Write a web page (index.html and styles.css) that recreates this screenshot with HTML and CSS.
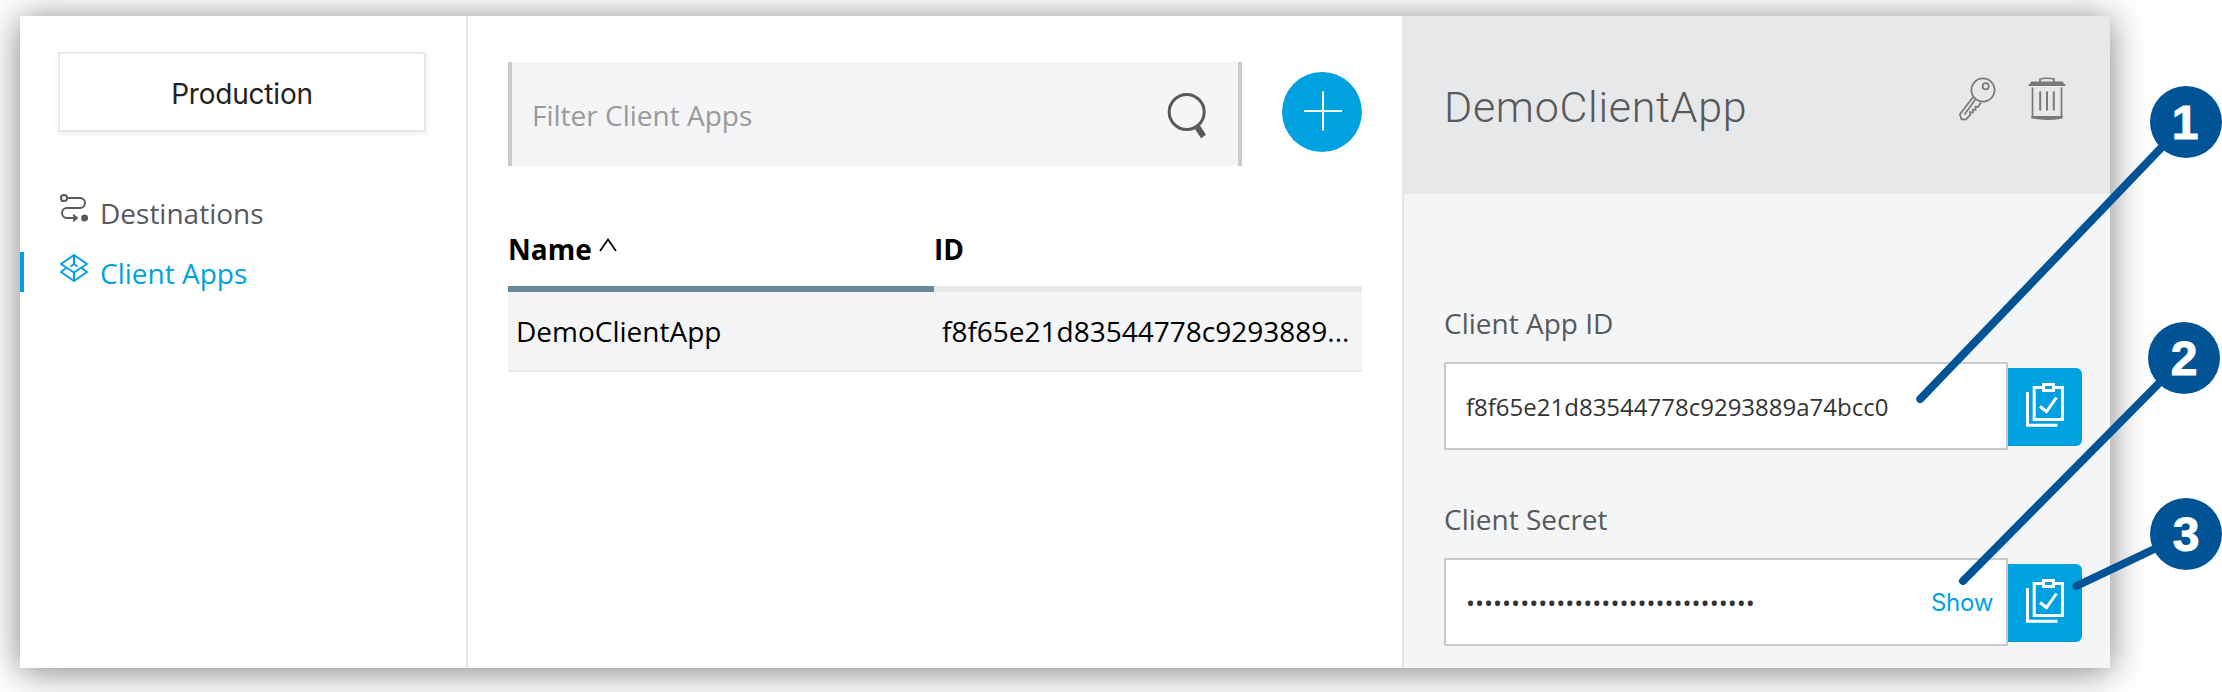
FILE: index.html
```
<!DOCTYPE html>
<html lang="en">
<head>
<meta charset="utf-8">
<title>Client Apps</title>
<link rel="stylesheet" href="styles.css">
</head>
<body>
<main class="window">
  <nav class="sidebar">
    <button class="environment">Production</button>
    <ul class="menu">
      <li class="menu-item">
        <svg class="menu-icon" viewBox="60 192 28 40" fill="none" stroke="currentColor" stroke-width="2">
          <circle cx="64" cy="198" r="3.1"/>
          <path d="M67 198H80a5 5 0 0 1 0 10H67a5 5 0 0 0 0 10H77M73.5 214.5C74 216.500 75.500 217.500 77.500 218C75.500 218.500 74 219.500 73.500 221.500"/>
          <circle cx="84.600" cy="218" r="3.500" fill="currentColor" stroke="none"/>
        </svg>
        <span class="menu-label">Destinations</span>
      </li>
      <li class="menu-item active">
        <svg class="menu-icon" viewBox="60 252 28 40" fill="none" stroke="currentColor" stroke-width="2" stroke-linejoin="round">
          <path d="M74 255L87 264L74 272.500L61 264ZM66.500 267.800L61 272L74 281L87 272L81.500 267.800M74 255V264M74 272.500V281M70.500 266.500L74 264L77.500 266.500"/>
        </svg>
        <span class="menu-label">Client Apps</span>
      </li>
    </ul>
  </nav>
  <section class="list">
    <div class="toolbar">
      <div class="filter">
        <span class="placeholder">Filter Client Apps</span>
        <svg class="search-icon" viewBox="1167 90 40 48" fill="none" stroke="currentColor">
          <circle cx="1186.700" cy="111" r="17.500" stroke-width="3"/>
          <path d="M1197 125.500L1203.500 135.500" stroke-width="6"/>
        </svg>
      </div>
      <button class="add" aria-label="Add">
        <svg class="add-icon" viewBox="0 0 80 80"><path d="M22 39H60M41 19.500V58.500" stroke="currentColor" stroke-width="2"/></svg>
      </button>
    </div>
    <div class="table">
      <div class="row head">
        <div class="cell sorted">Name
          <svg class="caret" viewBox="0 0 18 14" fill="none" stroke="currentColor" stroke-width="1.700"><path d="M1 13L9 1.500L17 13"/></svg>
        </div>
        <div class="cell">ID</div>
      </div>
      <div class="row body">
        <div class="cell">DemoClientApp</div>
        <div class="cell">f8f65e21d83544778c9293889...</div>
      </div>
    </div>
  </section>
  <aside class="detail">
    <header class="detail-head">
      <h1 class="title">DemoClientApp</h1>
      <svg class="actions" viewBox="1958 76 110 46" fill="none" stroke="currentColor" stroke-width="1.700">
        <circle cx="1983" cy="90" r="11.600"/>
        <circle cx="1985.700" cy="86.300" r="3.100"/>
        <path d="M1973.500 96.500L1959.800 114.500L1961.500 119.400H1966L1970.500 114.500L1970 112L1973 112.500L1972.800 109.500L1975.500 110L1975.500 106.500L1978 107L1981 102.500M1976 98.500L1964.500 114.500"/>
        <path d="M2040 82V79Q2047 77.500 2054 79V82M2032.500 87.500V118M2061.500 87.500V118" />
        <path d="M2040.200 91.500V110.500M2047 91.500V110.500M2053.800 91.500V110.500" stroke-width="2"/>
        <path d="M2031.500 81.500H2062.500L2066 86H2028ZM2031.500 116H2062.500V118.500Q2047 121.500 2031.500 118.500Z" fill="currentColor" stroke="none"/>
      </svg>
    </header>
    <div class="fields">
      <div class="field">
        <div class="label">Client App ID</div>
        <div class="control">
          <div class="input"><span class="value">f8f65e21d83544778c9293889a74bcc0</span></div>
          <button class="copy" aria-label="Copy">
            <svg class="copy-icon" viewBox="0 0 74 78" fill="none" stroke="currentColor" stroke-width="3">
              <path d="M34 19.500H26.200V51.500H54.500V19.500H47M35.500 16.500H45.500V22.500H35.500ZM32 38.500L38.500 43.500L48.500 29.500M19.500 24V57.300H49.500"/>
            </svg>
          </button>
        </div>
      </div>
      <div class="field">
        <div class="label">Client Secret</div>
        <div class="control">
          <div class="input"><span class="value">••••••••••••••••••••••••••••••••</span><span class="show">Show</span></div>
          <button class="copy" aria-label="Copy">
            <svg class="copy-icon" viewBox="0 0 74 78" fill="none" stroke="currentColor" stroke-width="3">
              <path d="M34 19.500H26.200V51.500H54.500V19.500H47M35.500 16.500H45.500V22.500H35.500ZM32 38.500L38.500 43.500L48.500 29.500M19.500 24V57.300H49.500"/>
            </svg>
          </button>
        </div>
      </div>
    </div>
  </aside>
</main>
<svg class="callouts" viewBox="0 0 2222 692">
  <g class="leader">
    <path d="M1920.300 399L2186 122M1963 581L2184 358M2076.500 586L2186 534"/>
  </g>
  <g class="badge">
    <circle cx="2186" cy="122" r="36"/>
    <circle cx="2184" cy="358" r="36"/>
    <circle cx="2186" cy="534" r="36"/>
  </g>
  <g class="number">
    <text x="2185" y="139">1</text>
    <text x="2184" y="375">2</text>
    <text x="2186" y="551">3</text>
  </g>
</svg>
</body>
</html>
```
FILE: styles.css
```
* { box-sizing: border-box; }
body {
  margin: 0;
  width: 2222px;
  height: 692px;
  padding: 16px 112px 24px 20px;
  overflow: hidden;
  background: #fff;
  font-family: "Open Sans", "Noto Sans", sans-serif;
  font-size: 28px;
  line-height: 40px;
  color: #000;
}
button { border: 0; padding: 0; font: inherit; }
.window {
  display: flex;
  height: 652px;
  background: #fff;
  box-shadow: 0 3px 34px rgba(0, 0, 0, 0.5);
}
.sidebar {
  width: 448px;
  padding-top: 36px;
  border-right: 2px solid #e7e8ea;
}
.environment {
  display: block;
  width: 368px;
  height: 80px;
  margin-left: 38px;
  padding-top: 4px;
  border: 2px solid #e9e9e9;
  background: #fff;
  box-shadow: 0 2px 6px rgba(0, 0, 0, 0.07);
  color: #222;
  font-family: Inter, sans-serif;
  font-size: 28px;
  letter-spacing: -0.2px;
}
.menu {
  list-style: none;
  margin: 60px 0 0;
  padding: 0;
  display: grid;
  gap: 20px;
}
.menu-item {
  display: flex;
  align-items: center;
  gap: 12px;
  height: 40px;
  padding-left: 36px;
  border-left: 4px solid transparent;
  color: #58595b;
}
.menu-item.active { border-color: #00a1e0; color: #00a1e0; }
.menu-icon { width: 28px; height: 40px; }
.menu-label { padding-top: 2px; }
.list { width: 934px; padding: 46px 40px 0; }
.toolbar { display: flex; gap: 40px; align-items: flex-start; }
.filter {
  width: 734px;
  height: 104px;
  display: flex;
  align-items: center;
  justify-content: space-between;
  padding: 2px 31px 0 20px;
  background: #f4f5f7;
  border: 4px solid #cacbcd;
  border-width: 0 4px;
}
.placeholder { color: #999a9c; }
.search-icon { width: 40px; height: 48px; color: #58595b; }
.add {
  width: 80px;
  height: 80px;
  margin-top: 10px;
  border-radius: 50%;
  background: #00a1e0;
  color: #fff;
}
.add-icon { display: block; width: 80px; height: 80px; }
.table { margin-top: 63px; }
.row { display: grid; grid-template-columns: 426px 428px; }
.head { font-weight: 700; }
.head .cell { height: 63px; border-bottom: 6px solid #e7e8ea; }
.head .sorted { border-color: #6a899a; }
.caret { width: 18px; height: 14px; vertical-align: 8px; }
.body { height: 80px; background: #f4f5f7; border-bottom: 2px solid #e7e8ea; }
.body .cell { padding-left: 8px; line-height: 78px; white-space: nowrap; }
.detail { flex: 1; background: #f4f5f7; border-left: 2px solid #e7e8ea; }
.detail-head {
  height: 178px;
  display: flex;
  justify-content: space-between;
  padding: 60px 42px 0 40px;
  background: #e7e8ea;
  color: #58595b;
}
.title {
  margin: 0;
  font-family: Roboto, sans-serif;
  font-weight: 300;
  font-size: 43px;
  letter-spacing: 0.7px;
  line-height: 63px;
}
.actions { width: 110px; height: 46px; color: #77797b; }
.fields { padding: 109px 28px 0 40px; }
.field { height: 196px; }
.label { color: #58595b; height: 59px; line-height: 40px; }
.control { display: flex; align-items: center; }
.input {
  display: flex;
  align-items: center;
  justify-content: space-between;
  width: 564px;
  height: 88px;
  padding: 2px 13px 0 20px;
  border: 2px solid #c8c9cb;
  background: #fff;
  color: #333;
  font-size: 24px;
}
.show { font-family: Inter, sans-serif; color: #00a1e0; letter-spacing: -0.3px; }
.copy {
  width: 74px;
  height: 78px;
  margin-top: 2px;
  border-radius: 0 6px 6px 0;
  background: #00a1e0;
  color: #fff;
}
.copy-icon { display: block; width: 74px; height: 78px; }
.callouts { position: absolute; inset: 0; width: 2222px; height: 692px; }
.leader { stroke: #005495; stroke-width: 8; stroke-linecap: round; fill: none; }
.badge { fill: #005495; }
.number {
  font: 700 48px "Liberation Sans", Arial, sans-serif;
  fill: #fff;
  stroke: #fff;
  stroke-width: 1;
  text-anchor: middle;
}
```
